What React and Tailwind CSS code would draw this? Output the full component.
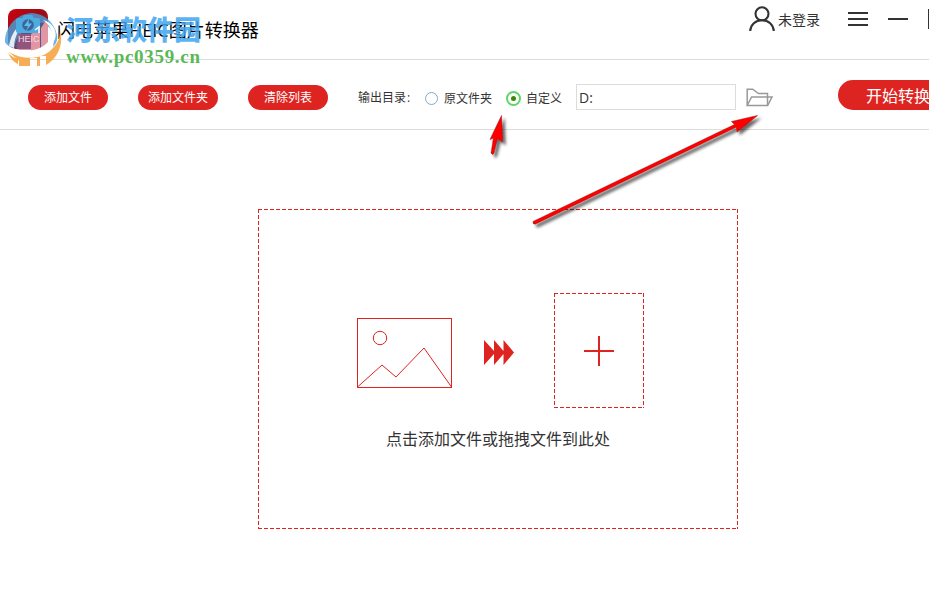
import React from "react";

const RED = "#de2421";

function AppLogo() {
  return (
    <svg className="block h-10 w-10" viewBox="0 0 40 40">
      <defs>
        <linearGradient id="logoBg" x1="0" y1="0" x2="1" y2="1">
          <stop offset="0" stopColor="#c9040f" />
          <stop offset="0.5" stopColor="#9a0d16" />
          <stop offset="1" stopColor="#c8232d" />
        </linearGradient>
      </defs>
      <rect width="40" height="40" rx="8" fill="url(#logoBg)" />
    </svg>
  );
}

function PillButton({ children }) {
  return (
    <button className="flex h-[25px] w-20 items-center justify-center rounded-full bg-[#de2421] pb-px text-xs leading-none text-white">
      {children}
    </button>
  );
}

function UserIcon() {
  return (
    <svg className="block h-[25px] w-[26px]" viewBox="0 0 26 25" fill="none" stroke="#333" strokeWidth="2.1">
      <circle cx="13" cy="7.800" r="6.500" />
      <path d="M1.200 25C1.600 18.500 6.500 14.300 13 14.300S24.400 18.500 24.800 25" />
    </svg>
  );
}

function FolderIcon() {
  return (
    <svg className="block h-[19px] w-[28px]" viewBox="0 0 28 19" fill="none" stroke="#999" strokeWidth="1.5">
      <path d="M1.200 17.500V1.200H6.700L12.500 5.500H21.500V17.500" />
      <path d="M1.200 17.500L5.600 9H26L21.600 17.500Z" />
    </svg>
  );
}

function Watermark() {
  return (
    <div className="pointer-events-none absolute left-0 top-0 h-[75px] w-[270px]">
      <svg className="absolute left-0 top-0 h-[75px] w-[70px]" viewBox="0 0 70 75">
        {/* blue disc */}
        <path d="M5 42C5 27 16 14 32 13C45 14 54 22 57 35C58 40 56 44 53 47C55 37 53 29 45 24C36 20 19 31 15 45L14 49C10 48 6 45 5 42Z" fill="#43a3df" fillOpacity="0.8" />
        <path d="M15 47C17 31 34 20 48 24V43Q47 48 40 49H17Z" fill="#4f5f95" fillOpacity="0.9" />
        {/* twin pillars */}
        <path d="M31 34L37 30H40V50L31 51Z M41 28L45 22H48V45L41 50Z" fill="#e295a2" />
        <path d="M18 34H31V50H17Z" fill="#b85274" fillOpacity="0.6" />
        {/* white swoosh */}
        <path d="M5 43C9 47 14 49 20 50C33 53 47 47 51 37C53 31 50 25 43 20C52 22 58 31 55 39C50 51 36 57 22 56C13 55 7 50 5 43Z" fill="#fff" />
        <path d="M9 46C11 32 20 22 31 18C22 24 14 34 14 48Z" fill="#fff" fillOpacity="0.85" />
        {/* orange base */}
        <path d="M60 31C64 45 57 59 46 65V56H40V66H37V58H30V66H19V61L9 52C24 61 42 59 51 50C57 44 60 39 60 31Z" fill="#f7a94c" fillOpacity="0.95" />
        <path d="M8 53C11 56 14 58 18 59V64C14 62 11 59 8 53Z" fill="#f7a94c" />
        {/* camera */}
        <path d="M16 20Q16 18 18 18H22L24 15H32L34 18H38Q40 18 40 20V31Q40 33 38 33H18Q16 33 16 31Z" fill="#4dacdf" />
        <circle cx="28" cy="25" r="5.800" fill="#3b6599" />
        <path d="M29 19L24 26H28L26 31L32 23.500H28.500Z" fill="#61bbed" />
        <path d="M35 30L39 27V33" fill="none" stroke="#fff" strokeWidth="1.5" />
      </svg>
      <span className="absolute left-[18px] top-[35px] font-['Liberation_Sans',sans-serif] text-[9px] leading-none text-[#f6dce5]">HEIC</span>
      <span className="absolute left-[66px] top-[15px] whitespace-nowrap text-[27px] font-black leading-[28px] text-[#3fa5ef]/85">河东软件园</span>
      <span className="absolute left-[66px] top-[47px] whitespace-nowrap font-['Liberation_Serif',serif] text-[19px] font-bold leading-5 tracking-[0.7px] text-[#5ab955]">www.pc0359.cn</span>
    </div>
  );
}

function Arrows() {
  return (
    <svg className="pointer-events-none absolute left-0 top-0 h-[595px] w-[929px]" viewBox="0 0 929 595">
      <defs>
        <filter id="shade" x="-30%" y="-30%" width="170%" height="170%">
          <feDropShadow dx="3" dy="3" stdDeviation="1.800" floodColor="#000" floodOpacity="0.6" />
        </filter>
      </defs>
      <g fill="#fe0000" stroke="#9b1010" strokeWidth="0.5" strokeLinejoin="round" filter="url(#shade)">
        <path d="M501.500 115.500L502.500 142L497.500 138.500L493.800 153.500Q492.300 155.500 491 153L493.500 138L490 139.500Z" />
        <path d="M757.500 115.500L737 132L736.500 127L535 224.200Q532.500 224 533 221.500L734.500 124.500L731.500 121.500Z" />
      </g>
    </svg>
  );
}

function ImageIcon() {
  return (
    <svg className="block h-[70px] w-[95px]" viewBox="0 0 95 70" fill="none" stroke={RED}>
      <rect x="0.5" y="0.5" width="94" height="69" />
      <circle cx="23" cy="20" r="6.700" />
      <path d="M0.5 69L25 47L39 59L67 30L94.500 69" />
    </svg>
  );
}

/* Four one-pixel strips of repeating dashes, one per edge. */
const dashed =
  "bg-[repeating-linear-gradient(90deg,#de2421_0_4px,transparent_4px_6px),repeating-linear-gradient(90deg,#de2421_0_4px,transparent_4px_6px),repeating-linear-gradient(180deg,#de2421_0_4px,transparent_4px_6px),repeating-linear-gradient(180deg,#de2421_0_4px,transparent_4px_6px)] bg-no-repeat [background-size:100%_1px,100%_1px,1px_100%,1px_100%] [background-position:0_0,0_100%,0_0,100%_0]";

export default function App() {
  return (
    <div className="relative flex h-[595px] w-[929px] flex-col overflow-hidden bg-white font-['Noto_Sans_CJK_SC',sans-serif] text-[#333]">
      <header className="flex h-[60px] shrink-0 border-b border-[#dcdcdc] pl-2">
        <div className="shrink-0 pt-[9px]">
          <AppLogo />
        </div>
        <h1 className="ml-[9px] mt-[17px] w-[210px] shrink-0 whitespace-nowrap text-[18px] font-normal leading-6 text-black">
          闪电苹果<span className="font-['Open_Sans',sans-serif]">HEIC</span>图片转换器
        </h1>
        <div className="ml-[482px] mt-[6px] shrink-0">
          <UserIcon />
        </div>
        <span className="ml-[3px] mt-[9px] w-[42px] shrink-0 whitespace-nowrap text-[14px] leading-5">未登录</span>
        <div className="ml-7 mt-3 flex w-5 shrink-0 flex-col gap-[4px]">
          <i className="h-[2px] bg-[#333]" />
          <i className="h-[2px] bg-[#333]" />
          <i className="h-[2px] bg-[#333]" />
        </div>
        <i className="ml-5 mt-[18px] h-[2px] w-5 shrink-0 bg-[#333]" />
        <i className="ml-5 mt-[9px] h-5 w-5 shrink-0 border-2 border-[#333]" />
      </header>

      <section className="flex h-[70px] shrink-0 border-b border-[#dcdcdc] pl-7 text-xs">
        <div className="flex shrink-0 gap-[30px] pt-[25px]">
          <PillButton>添加文件</PillButton>
          <PillButton>添加文件夹</PillButton>
          <PillButton>清除列表</PillButton>
        </div>
        <span className="ml-[30px] mt-[27px] w-[67px] shrink-0 whitespace-nowrap leading-5">
          输出目录<span className="pl-px font-['Open_Sans',sans-serif]">:</span>
        </span>
        <i className="mt-8 h-[13px] w-[13px] shrink-0 rounded-full border border-[#82a9cf]" />
        <span className="ml-[6px] mt-[28px] w-12 shrink-0 whitespace-nowrap leading-5">原文件夹</span>
        <i className="ml-[14px] mt-[31px] flex h-[15px] w-[15px] shrink-0 items-center justify-center rounded-full border-2 border-[#5bd668]">
          <i className="h-[5px] w-[5px] rounded-full bg-[#3d8708]" />
        </i>
        <span className="ml-[5px] mt-[28px] w-9 shrink-0 whitespace-nowrap leading-5">自定义</span>
        <div className="ml-[14px] mt-6 h-[26px] w-40 shrink-0 border border-[#dcdcdc] pl-[2px] font-['Open_Sans',sans-serif] text-[14px] leading-[25px]">
          D:
        </div>
        <div className="ml-[10px] mt-7 shrink-0">
          <FolderIcon />
        </div>
        <button className="ml-16 mt-5 h-[30px] w-[120px] shrink-0 whitespace-nowrap rounded-full bg-[#de2421] text-center text-base leading-[28px] text-white">
          开始转换
        </button>
      </section>

      <main className="pl-[258px] pt-[79px]">
        <div className={"flex h-80 w-[480px] flex-col items-center " + dashed}>
          <div className="flex w-full pl-[99px] pt-[84px]">
            <div className="mt-[25px]">
              <ImageIcon />
            </div>
            <svg className="ml-8 mt-[47px] block h-[25px] w-[30px]" viewBox="0 0 30 25" fill={RED}>
              <path d="M0 0L10 11V0L19.500 11V0L30 12.500L19.500 25V14L10 25V14L0 25Z" />
            </svg>
            <div className={"ml-10 flex h-[115px] w-[90px] justify-center pt-[43px] " + dashed}>
              <svg className="block h-[30px] w-[30px]" viewBox="0 0 30 30" fill={RED}>
                <path d="M14 0H16V14H30V16H16V30H14V16H0V14H14Z" />
              </svg>
            </div>
          </div>
          <p className="mt-[18px] whitespace-nowrap text-base leading-6">点击添加文件或拖拽文件到此处</p>
        </div>
      </main>

      <Watermark />
      <Arrows />
    </div>
  );
}
